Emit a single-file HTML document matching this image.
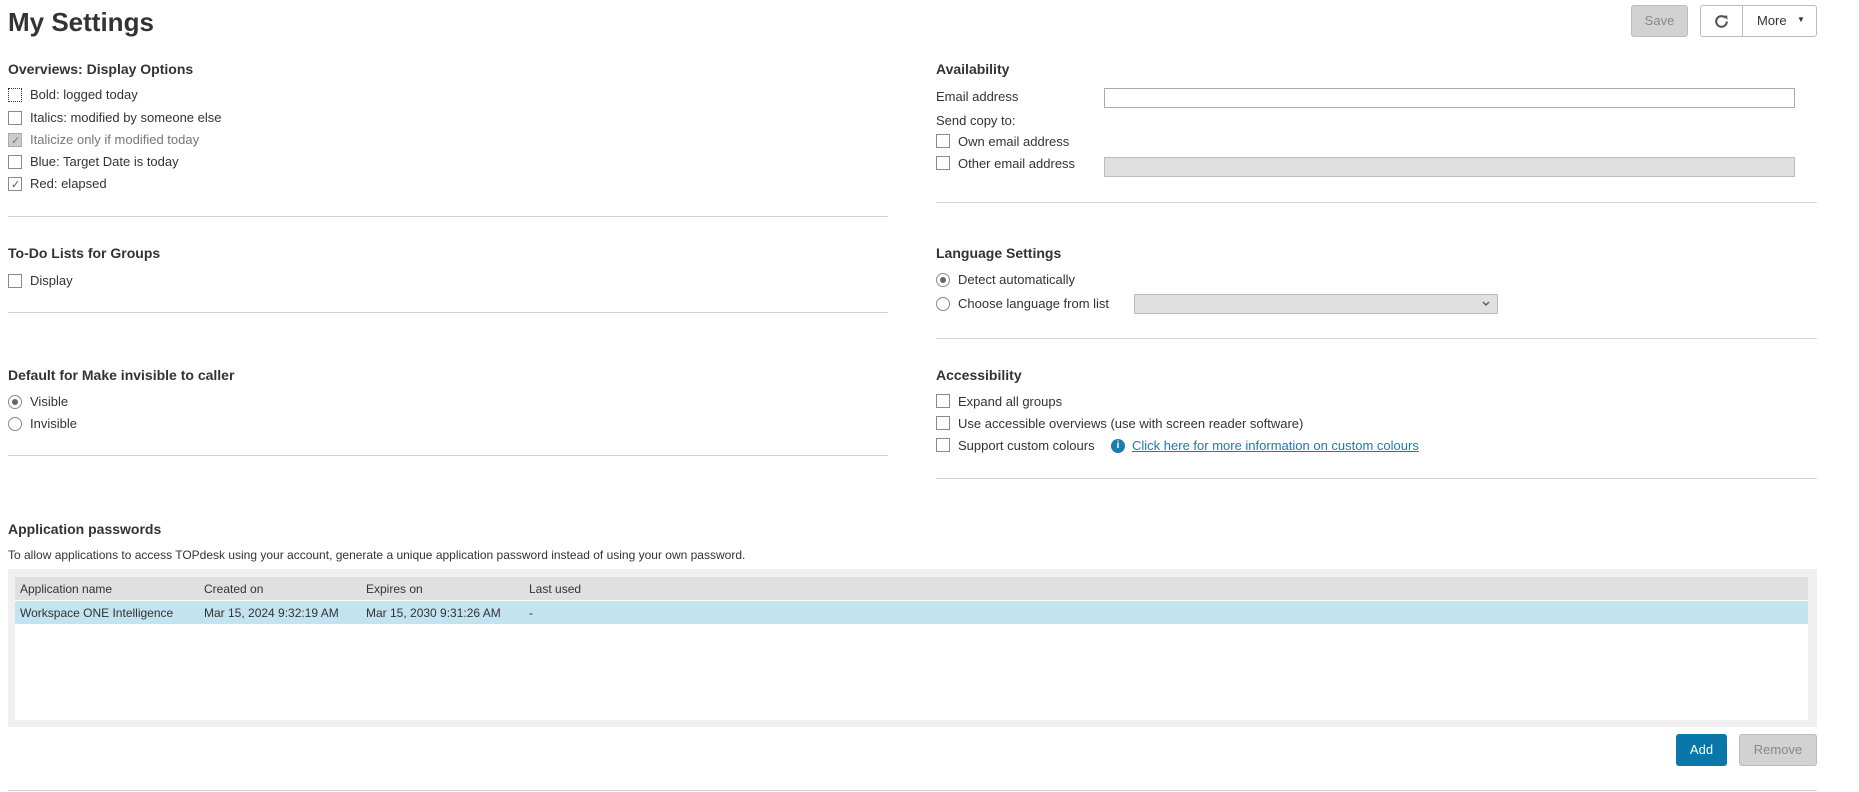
<!DOCTYPE html>
<html><head><meta charset="utf-8"><style>
*{box-sizing:border-box;margin:0;padding:0}
body{width:1859px;height:792px;position:relative;background:#fff;font-family:"Liberation Sans",Arial,sans-serif;color:#333;font-size:13px;overflow:hidden}
.a{position:absolute;white-space:nowrap}
h1{position:absolute;left:8px;top:7px;font-size:26px;font-weight:bold;color:#333}
.h{position:absolute;font-size:14px;font-weight:bold;color:#333;line-height:16px}
.t{position:absolute;line-height:16px;white-space:nowrap}
.cb{position:absolute;width:14px;height:14px;border:1px solid #8a8a8a;background:#fff}
.rb{position:absolute;width:14px;height:14px;border:1px solid #8a8a8a;border-radius:50%;background:#fff}
.rb.on::after{content:"";position:absolute;left:3px;top:3px;width:6px;height:6px;border-radius:50%;background:#666}
.hr{position:absolute;height:1px;background:#d4d4d4}
.chk{position:absolute;left:2px;top:0px;font-size:11px;color:#555}
.btn{position:absolute;border:1px solid #bbb;border-radius:3px;font-size:13px;text-align:center}
</style></head><body>
<h1>My Settings</h1>
<div class="btn" style="left:1631px;top:5px;width:57px;height:32px;background:#d2d2d2;color:#888;line-height:30px">Save</div>
<div class="btn" style="left:1700px;top:5px;width:117px;height:32px;background:#fff;color:#333;line-height:30px">
 <div style="position:absolute;left:41px;top:0;width:1px;height:30px;background:#bbb"></div>
 <svg style="position:absolute;left:12px;top:7px" width="17" height="17" viewBox="0 0 16 16"><path d="M13 8a5 5 0 1 1-1.5-3.6" fill="none" stroke="#555" stroke-width="2"/><path d="M9.5 2.5L13.5 2.5L13.5 6.5Z" fill="#555"/></svg>
 <span style="position:absolute;left:56px;top:0">More</span><span style="position:absolute;left:96px;top:-1px;font-size:8px">▼</span>
</div>

<!-- left column -->
<div class="h" style="left:8px;top:61px">Overviews: Display Options</div>
<div class="cb" style="left:8px;top:88px;border:1px dotted #333"></div><div class="t" style="left:30px;top:87px">Bold: logged today</div>
<div class="cb" style="left:8px;top:111px"></div><div class="t" style="left:30px;top:110px">Italics: modified by someone else</div>
<div class="cb" style="left:8px;top:133px;background:#ccc;border-color:#aaa"><span class="chk" style="color:#777">✓</span></div><div class="t" style="left:30px;top:132px;color:#777">Italicize only if modified today</div>
<div class="cb" style="left:8px;top:155px"></div><div class="t" style="left:30px;top:154px">Blue: Target Date is today</div>
<div class="cb" style="left:8px;top:177px"><span class="chk">✓</span></div><div class="t" style="left:30px;top:176px">Red: elapsed</div>
<div class="hr" style="left:8px;top:216px;width:880px"></div>

<div class="h" style="left:8px;top:245px">To-Do Lists for Groups</div>
<div class="cb" style="left:8px;top:274px"></div><div class="t" style="left:30px;top:273px">Display</div>
<div class="hr" style="left:8px;top:312px;width:880px"></div>

<div class="h" style="left:8px;top:367px">Default for Make invisible to caller</div>
<div class="rb on" style="left:8px;top:395px"></div><div class="t" style="left:30px;top:394px">Visible</div>
<div class="rb" style="left:8px;top:417px"></div><div class="t" style="left:30px;top:416px">Invisible</div>
<div class="hr" style="left:8px;top:455px;width:880px"></div>

<!-- right column -->
<div class="h" style="left:936px;top:61px">Availability</div>
<div class="t" style="left:936px;top:89px">Email address</div>
<div class="a" style="left:1104px;top:88px;width:691px;height:20px;border:1px solid #aaa;background:#fff"></div>
<div class="t" style="left:936px;top:113px">Send copy to:</div>
<div class="cb" style="left:936px;top:134px"></div><div class="t" style="left:958px;top:134px">Own email address</div>
<div class="cb" style="left:936px;top:156px"></div><div class="t" style="left:958px;top:156px">Other email address</div>
<div class="a" style="left:1104px;top:157px;width:691px;height:20px;border:1px solid #bbb;background:#e0e0e0"></div>
<div class="hr" style="left:936px;top:202px;width:881px"></div>

<div class="h" style="left:936px;top:245px">Language Settings</div>
<div class="rb on" style="left:936px;top:273px"></div><div class="t" style="left:958px;top:272px">Detect automatically</div>
<div class="rb" style="left:936px;top:297px"></div><div class="t" style="left:958px;top:296px">Choose language from list</div>
<div class="a" style="left:1134px;top:294px;width:364px;height:20px;border:1px solid #bbb;background:#e0e0e0"><svg style="position:absolute;right:7px;top:6px" width="8" height="6" viewBox="0 0 8 6"><path d="M1 1L4 4L7 1" fill="none" stroke="#555" stroke-width="1.3"/></svg></div>
<div class="hr" style="left:936px;top:338px;width:881px"></div>

<div class="h" style="left:936px;top:367px">Accessibility</div>
<div class="cb" style="left:936px;top:394px"></div><div class="t" style="left:958px;top:394px">Expand all groups</div>
<div class="cb" style="left:936px;top:416px"></div><div class="t" style="left:958px;top:416px">Use accessible overviews (use with screen reader software)</div>
<div class="cb" style="left:936px;top:438px"></div><div class="t" style="left:958px;top:438px">Support custom colours</div>
<div class="a" style="left:1111px;top:439px;width:14px;height:14px;border-radius:50%;background:#1a7bb0;color:#fff;font-size:10px;font-weight:bold;text-align:center;line-height:14px">i</div>
<div class="t" style="left:1132px;top:438px;color:#1a7bb0;text-decoration:underline">Click here for more information on custom colours</div>
<div class="hr" style="left:936px;top:478px;width:881px"></div>

<!-- app passwords -->
<div class="h" style="left:8px;top:521px">Application passwords</div>
<div class="t" style="left:8px;top:547px;font-size:12px">To allow applications to access TOPdesk using your account, generate a unique application password instead of using your own password.</div>
<div class="a" style="left:8px;top:569px;width:1809px;height:158px;background:#f0f0f0"></div>
<div class="a" style="left:15px;top:577px;width:1793px;height:143px;background:#fff"></div>
<div class="a" style="left:15px;top:577px;width:1793px;height:23px;background:#e0e0e0"></div>
<div class="a" style="left:15px;top:601px;width:1793px;height:23px;background:#c3e3f1"></div>
<div class="t" style="left:20px;top:581px;font-size:12px">Application name</div>
<div class="t" style="left:204px;top:581px;font-size:12px">Created on</div>
<div class="t" style="left:366px;top:581px;font-size:12px">Expires on</div>
<div class="t" style="left:529px;top:581px;font-size:12px">Last used</div>
<div class="t" style="left:20px;top:605px;font-size:12px">Workspace ONE Intelligence</div>
<div class="t" style="left:204px;top:605px;font-size:12px">Mar 15, 2024 9:32:19 AM</div>
<div class="t" style="left:366px;top:605px;font-size:12px">Mar 15, 2030 9:31:26 AM</div>
<div class="t" style="left:529px;top:605px;font-size:12px">-</div>

<div class="btn" style="left:1676px;top:734px;width:51px;height:32px;background:#0a77aa;border-color:#0a77aa;color:#fff;line-height:30px">Add</div>
<div class="btn" style="left:1739px;top:734px;width:78px;height:32px;background:#d2d2d2;color:#888;line-height:30px">Remove</div>
<div class="hr" style="left:8px;top:790px;width:1809px"></div>
</body></html>
